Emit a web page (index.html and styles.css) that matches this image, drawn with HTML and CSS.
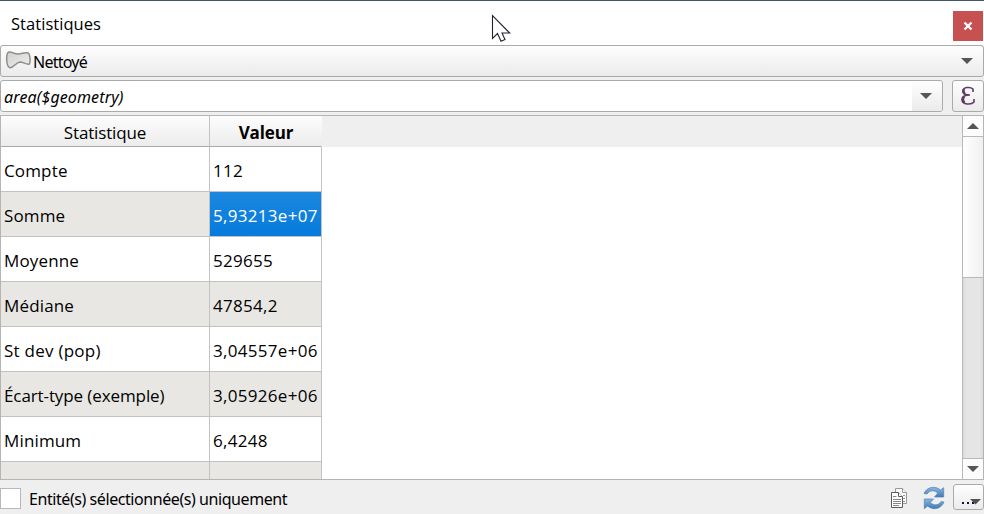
FILE: index.html
```html
<!DOCTYPE html>
<html lang="fr">
<head>
<meta charset="utf-8">
<title>Statistiques</title>
<link rel="stylesheet" href="styles.css">
</head>
<body>
<div class="panel">
  <header class="titlebar">
    <span class="title">Statistiques</span>
    <button class="close" aria-label="Fermer"><svg width="10" height="10" viewBox="0 0 10 10"><path d="M1.500 1.500L8.500 8.500M8.500 1.500L1.500 8.500" stroke="#fff" stroke-width="2.200"/></svg></button>
  </header>
  <div class="combo layer">
    <svg class="polygon" width="26" height="20" viewBox="0 0 26 20"><defs><linearGradient id="pg" x2="1" y2="1"><stop stop-color="#d0d0ce"/><stop offset="1" stop-color="#f0f0f0"/></linearGradient></defs><path d="M4 2C7 1.500 9 4 13 4C17 4 19 2.200 22.500 2.800C25.500 3.500 25.500 12.500 24.300 14C22 15 18 12 15 12C11 12.300 8.500 18 5 17.700C1 17 .5 3.300 4 2Z" fill="url(#pg)" stroke="#8d8e8a" stroke-width="1.500"/></svg>
    <span class="ui layer-name">Nettoyé</span>
    <svg class="arrow" width="12" height="6"><path d="M0 0H12L6 6Z"/></svg>
  </div>
  <div class="expression">
    <div class="combo field"><span class="ui formula">area($geometry)</span><span class="drop"><svg class="arrow" width="12" height="6"><path d="M0 0H12L6 6Z"/></svg></span></div>
    <button class="epsilon" aria-label="Expression"><svg width="16" height="20" viewBox="0 0 16 20"><path d="M13 6V3C10.500 .7 3 .7 3 5.200C3 8.300 5.500 9 10 9C4.500 9 2 10.500 2 13.500C2 19 11.500 19 14 16V13" fill="none" stroke="#5d3a68" stroke-width="1.600"/><path d="M4 3Q2.500 6 5 8M4 10.500Q1.500 14 4.500 16.500" fill="none" stroke="#5d3a68" stroke-width="2.500"/></svg></button>
  </div>
  <main class="table">
    <div class="view">
      <div class="row head"><span>Statistique</span><b>Valeur</b></div>
      <div class="row"><span>Compte</span><span>112</span></div>
      <div class="row alt"><span>Somme</span><span class="selected">5,93213e+07</span></div>
      <div class="row"><span>Moyenne</span><span>529655</span></div>
      <div class="row alt"><span>Médiane</span><span>47854,2</span></div>
      <div class="row"><span class="loose">St dev (pop)</span><span>3,04557e+06</span></div>
      <div class="row alt"><span class="tight">Écart-type (exemple)</span><span>3,05926e+06</span></div>
      <div class="row"><span>Minimum</span><span>6,4248</span></div>
      <div class="row alt"><span></span><span></span></div>
    </div>
    <div class="scrollbar">
      <div class="step"><svg class="arrow" width="12" height="6"><path d="M0 6H12L6 0Z"/></svg></div>
      <div class="thumb"></div>
      <div class="track"></div>
      <div class="step down"><svg class="arrow" width="12" height="6"><path d="M0 0H12L6 6Z"/></svg></div>
    </div>
  </main>
  <footer class="footer">
    <span class="checkbox"></span><span class="ui check-label">Entité(s) sélectionnée(s) uniquement</span>
    <svg class="copy" width="18" height="22" viewBox="0 0 18 22"><g fill="#fafafa" stroke="#999" stroke-width="1"><path d="M5.500 1.500H12.500L16.500 5.500V16.500H5.500Z"/><path d="M12.500 1.500V5.500H16.500M13 8.500H15M13 11.500H15M13 14.500H15"/></g><g fill="#fff" stroke="#5c5c5c" stroke-width="1"><path d="M1.500 5.500H8L12.500 9.500V20.500H1.500Z"/><path d="M8.500 5.500V9.500H12.500"/><path stroke="#888" d="M3 9.500H6.500M3 12.500H11M3 14.500H11M3 16.500H11M3 18.500H9"/></g></svg>
    <svg class="refresh" width="22" height="24" viewBox="0 0 22 24"><defs><linearGradient id="bg" x2="0" y2="1"><stop stop-color="#8eb7df"/><stop offset="1" stop-color="#3f79b5"/></linearGradient></defs><g fill="url(#bg)" stroke="#4f82b6" stroke-width=".7"><path d="M1 7.500C4 .5 12.500-.5 17.500 4L20.700 1.700V11H11.500L14.700 7.200C11 3.500 6.500 4.500 4 8Z"/><path d="M21 16C18 23.500 9.500 24.500 4.700 20L1.300 22.700V13H10.500L7.300 16.600C11 20 15.500 19.500 18 15.600Z"/></g></svg>
    <button class="more" aria-label="Plus"><svg width="24" height="9" viewBox="0 0 24 9"><path d="M5 5H7V7H5ZM10 5H12V7H10ZM15 5H17V7H15Z" fill="#111133"/><path d="M13 2H24L18.500 7.500Z" fill="#505050"/></svg></button>
  </footer>
  <svg class="cursor" width="20" height="29" viewBox="0 0 20 29"><path d="M1.500 1.500V24.500L6.500 19.500L10 27.300L14 25.500L11 19H18.700Z" fill="#fff" stroke="#22222e" stroke-width="1.100"/></svg>
</div>
</body>
</html>
```
FILE: styles.css
```css
* { box-sizing: border-box; }
body { margin: 0; background: #efefef; color: #000; font: 17px/24px "Open Sans", "Noto Sans", sans-serif; }
button { padding: 0; font: inherit; }
svg { display: block; flex: none; }
span, b { white-space: nowrap; }
.panel { position: relative; display: flex; flex-direction: column; width: 984px; height: 514px; overflow: hidden; border-top: 1px solid #42566c; }
.titlebar { display: flex; height: 44px; padding: 10px 1px 0 11px; background: #fff; }
.title { flex: 1; padding-top: 1px; font-size: 16.5px; letter-spacing: .05px; }
.close { display: grid; place-items: center; width: 30px; height: 30px; border: 0; background: #c75050; }
.ui { font-family: "Noto Sans", "Open Sans", sans-serif; font-size: 16px; }
.combo, .epsilon, .more { border: 1px solid #aaa; border-radius: 3px; background: linear-gradient(#fefefe, #ebebeb); }
.layer { display: flex; align-items: center; height: 32px; padding: 0 10px 0 4px; }
.polygon { margin-top: -2px; }
.layer-name { flex: 1; margin: 2px 0 0 2px; letter-spacing: -.75px; }
.arrow { fill: #555; }
.expression { display: flex; gap: 9px; height: 32px; margin-top: 3px; }
.field { display: flex; align-items: center; width: 943px; background: #fff; }
.formula { flex: 1; padding: 2px 0 0 3px; font-style: italic; letter-spacing: .12px; }
.drop { display: grid; place-items: center; width: 30px; height: 30px; padding-right: 3px; border-radius: 0 3px 3px 0; background: linear-gradient(#fefefe, #ebebeb); }
.epsilon { display: grid; place-items: center; width: 32px; }
.table { display: flex; height: 365px; margin-top: 3px; border: 1px solid #b5b5b5; background: #fff; }
.view { flex: 1; overflow: hidden; }
.row { display: grid; grid-template-columns: 209px 112px; height: 45px; }
.row > * { padding: 12px 0 0 3px; border-right: 1px solid #c2c2c2; border-bottom: 1px solid #c2c2c2; }
.row > span:first-child { letter-spacing: .15px; }
.row > span:last-child { letter-spacing: .3px; }
.row > .loose:first-child { letter-spacing: .25px; }
.row > .tight:first-child { letter-spacing: -.1px; }
.alt > span { background: #e8e7e3; }
.row > .selected { background: linear-gradient(#1c87df, #067bdc); color: #fff; }
.head { height: 31px; background: linear-gradient(to right, transparent 321px, #efefef 321px); }
.head > * { padding: 5px 0 0; border-bottom-color: #aaa; background: linear-gradient(#fdfdfd, #ececec); text-align: center; }
.head > span:first-child { letter-spacing: -.15px; }
.head > b { padding-left: 1px; border-right-color: transparent; letter-spacing: -.15px; }
.scrollbar { display: flex; flex-direction: column; width: 21px; border-left: 1px solid #b8b8b8; }
.step { display: grid; place-items: center; height: 21px; border-bottom: 1px solid #b8b8b8; background: #fcfcfc; }
.step.down { border-top: 1px solid #b8b8b8; border-bottom: 0; }
.thumb { height: 141px; border-bottom: 1px solid #b8b8b8; background: linear-gradient(to right, #fff, #f0f0f0); }
.track { flex: 1; background: linear-gradient(to right, #dadada, #e5e5e5 3px, #e5e5e5 17px, #dadada); }
.footer { display: flex; align-items: center; height: 34px; }
.checkbox { width: 21px; height: 21px; margin-top: 3px; border: 1px solid #b8b8b8; background: #fff; }
.check-label { flex: 1; margin: 3px 0 0 8px; letter-spacing: -.43px; }
.copy { margin: 2px 15px 0 0; }
.refresh { margin: 2px 8px 0 0; }
.more { display: grid; place-items: center; width: 31px; height: 26px; padding-top: 9px; margin-top: -1px; }
.cursor { position: absolute; left: 491px; top: 13px; }
```
